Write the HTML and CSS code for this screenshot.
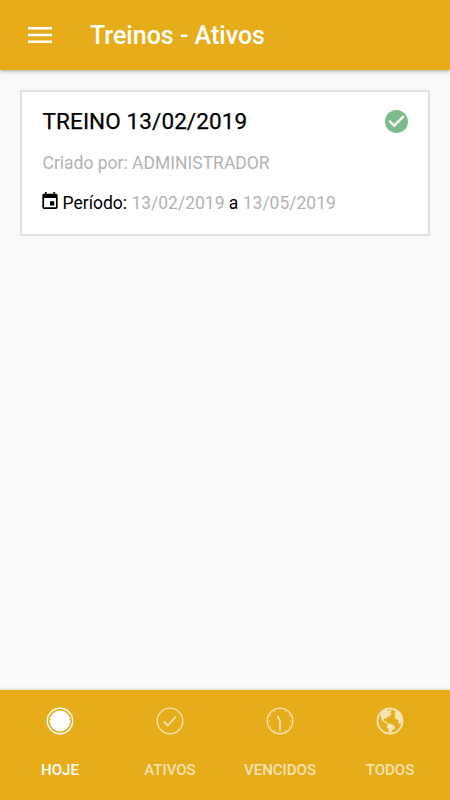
FILE: index.html
```html
<!DOCTYPE html>
<html lang="pt-BR">
<head>
<meta charset="utf-8">
<title>Treinos - Ativos</title>
<link rel="stylesheet" href="styles.css">
</head>
<body>
<header class="toolbar">
  <svg class="menu" viewBox="0 0 24 16"><path d="M0 1.2h24M0 8h24M0 14.8h24" stroke="#fff" stroke-width="2.4"/></svg>
  <h1>Treinos - Ativos</h1>
</header>
<main>
  <article class="card">
    <div class="card-head">
      <h2>TREINO 13/02/2019</h2>
      <svg class="status" viewBox="2 2 20 20"><path fill="#7dbb8c" d="M12 2C6.48 2 2 6.48 2 12s4.48 10 10 10 10-4.48 10-10S17.52 2 12 2zm-2 15l-5-5 1.41-1.41L10 14.17l7.59-7.59L19 8l-9 9z"/></svg>
    </div>
    <p class="author">Criado por: ADMINISTRADOR</p>
    <p class="period"><svg class="calendar" viewBox="3 1 18 20"><path d="M17 12h-5v5h5v-5zM16 1v2H8V1H6v2H5c-1.11 0-2 .9-2 2v14c0 1.1.89 2 2 2h14c1.1 0 2-.9 2-2V5c0-1.1-.9-2-2-2h-1V1h-2zm3 18H5V8h14v11z"/></svg><span>Período: <i>13/02/2019</i> a <i>13/05/2019</i></span></p>
  </article>
</main>
<nav class="tabs">
  <a class="tab active">
    <svg viewBox="0 0 28 28"><circle cx="14" cy="14" r="12.7" fill="none" stroke="currentColor" stroke-width="1.4"/><circle cx="14" cy="14" r="10.4" fill="currentColor"/></svg>
    <span>HOJE</span>
  </a>
  <a class="tab">
    <svg viewBox="0 0 28 28" fill="none" stroke="currentColor"><circle cx="14" cy="14" r="12.8" stroke-width="1.3"/><path d="M7.8 14.5l4 4L20 9.5" stroke-width="1.8"/></svg>
    <span>ATIVOS</span>
  </a>
  <a class="tab">
    <svg viewBox="0 0 28 28" fill="none" stroke="currentColor"><circle cx="14" cy="14" r="12.8" stroke-width="1.3"/><circle cx="14" cy="14" r="10.9" stroke-width="1.3" pathLength="120" stroke-dasharray="2 8" stroke-dashoffset="1"/><path d="M11.5 9l2.5 5v9.5" stroke-width="1.7"/></svg>
    <span>VENCIDOS</span>
  </a>
  <a class="tab">
    <svg viewBox="0 0 84 84"><circle cx="42" cy="42" r="37.5" fill="none" stroke="currentColor" stroke-width="5.5"/><path fill="currentColor" d="M13 21L23 9 38 5 33 10 40 12 42 8 47 11 43 17 48 20 42 25 39 29 34 29 32 36 27 33 23 37 25 43 30 43 34 49 42 50 51 53 58 59 55 66 49 70 45 78 38 75 37 66 32 59 35 52 28 48 19 43 16 34ZM50 6L61 9 72 20 78 34 77 48 70 52 66 46 67 39 61 37 56 31 58 23 54 19 60 15 55 12Z"/></svg>
    <span>TODOS</span>
  </a>
</nav>
</body>
</html>
```
FILE: styles.css
```css
* { box-sizing: border-box; }
body {
  margin: 0;
  height: 800px;
  display: flex;
  flex-direction: column;
  background: #f9f9f9;
  font-family: Roboto, sans-serif;
  color: #000;
}
h1, h2, p { margin: 0; font-weight: 500; }
.toolbar {
  height: 70px;
  display: flex;
  align-items: center;
  padding-left: 28px;
  background: #e6ac1a;
  color: #fff;
  box-shadow: 0 1px 4px rgba(0, 0, 0, .35);
}
.menu { width: 24px; height: 16px; }
h1 { margin: 2px 0 0 38px; font-size: 25px; line-height: 30px; }
main { flex: 1; padding: 20px; }
.card {
  height: 146px;
  padding: 15px 20px 0 20.5px;
  border: 2px solid #e0e0e0;
  background: #fff;
}
.card-head {
  height: 28px;
  display: flex;
  align-items: center;
  justify-content: space-between;
}
h2 {
  font-size: 22.5px;
  line-height: 28px;
  font-weight: 400;
  letter-spacing: .1px;
  -webkit-text-stroke: .25px #000;
}
.status { width: 23px; height: 23px; }
.author {
  margin-top: 17px;
  font-size: 17.5px;
  line-height: 22px;
  font-weight: 400;
  color: #b2b2b2;
}
.period {
  display: flex;
  margin-top: 18px;
  font-size: 17.5px;
  line-height: 22px;
  font-weight: 400;
}
.period i { font-style: normal; color: #b2b2b2; }
.calendar { width: 16px; height: 17px; margin: 0 5px 0 -1px; }
.tabs {
  height: 110px;
  display: flex;
  padding: 0 5px;
  background: #e6ac1a;
  box-shadow: 0 -1px 3px rgba(0, 0, 0, .12);
}
.tab {
  flex: 1;
  display: flex;
  flex-direction: column;
  align-items: center;
  padding-top: 16.5px;
  color: #f8e4b5;
  font-size: 15px;
  line-height: 20px;
  font-weight: 500;
}
.tab svg { width: 28px; height: 28px; }
.tab span { margin-top: 25.5px; }
.active { color: #fff; }
```
